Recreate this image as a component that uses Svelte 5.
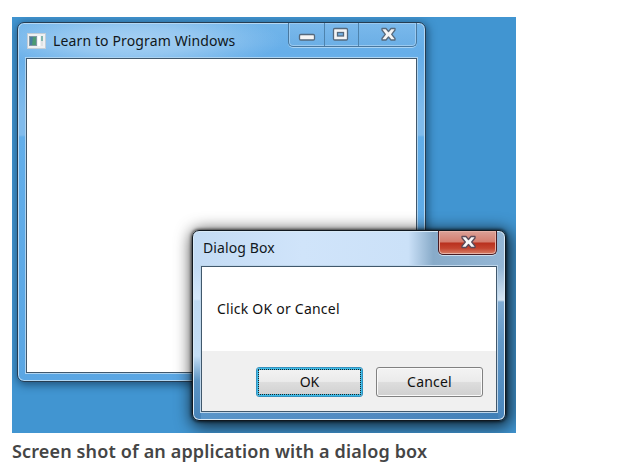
<script>
  const mainTitle = 'Learn to Program Windows';
  const dialogTitle = 'Dialog Box';
</script>

<figure>
  <div class="desktop">
    <section class="window main">
      <header>
        <svg class="appicon" width="19" height="16" viewBox="0 0 19 16">
          <rect x=".5" y=".5" width="18" height="15" fill="#eef0f2" stroke="#c3cdd6" />
          <rect x="2" y="3" width="8" height="10" fill="#8097a4" />
          <path d="M3 4h3v8H3z" fill="#497ca0" />
          <path d="M6 4h3v8H5z" fill="#4c9a72" />
          <path d="M11 3h2v10h-2z" fill="#fff" />
          <path d="M14 3h2v5h-2z" fill="#81b7b0" />
          <path d="M14 8h2v5h-2z" fill="#dfe2e4" />
        </svg>
        <span class="title t1">{mainTitle}</span>
        <div class="controls">
          <i class="min"><svg width="35" height="22"><rect x="10.5" y="11.5" width="15" height="5.5" rx="1.2" fill="#f5f5f5" stroke="#56697c" stroke-width="1.3" /></svg></i>
          <i class="max"><svg width="33" height="22"><rect x="8.5" y="5.5" width="14" height="11.5" rx="1.2" fill="#f5f5f5" stroke="#56697c" stroke-width="1.3" /><rect x="12.5" y="9.5" width="6" height="3.5" fill="#76b3e6" stroke="#56697c" stroke-width="1.3" /></svg></i>
          <i class="close"><svg width="58" height="22"><path d="M23 5.500h4l2.500 3 2.500-3h4v1.500l-3.300 4.300 3.300 4.200v1.500h-4l-2.500-3-2.500 3h-4v-1.500l3.300-4.200-3.300-4.300z" fill="#f5f5f5" stroke="#56697c" stroke-width="1.3" stroke-linejoin="round" /></svg></i>
        </div>
      </header>
      <div class="client"></div>
    </section>

    <section class="window dialog">
      <header>
        <span class="title t2">{dialogTitle}</span>
        <div class="red"><svg width="58" height="22"><path d="M23 5.500h4l2.500 3 2.500-3h4v1.500l-3.300 4 3.300 4v1.500h-4l-2.500-3-2.500 3h-4v-1.500l3.300-4-3.300-4z" fill="#f8f8f8" stroke="#5b4a58" stroke-width="1.3" stroke-linejoin="round" /></svg></div>
      </header>
      <div class="client">
        <p><span class="t3">Click OK or Cancel</span></p>
        <footer>
          <button class="ok"><span class="t4">OK</span></button>
          <button><span class="t5">Cancel</span></button>
        </footer>
      </div>
    </section>
  </div>
  <figcaption><span>Screen shot of an application with a dialog box</span></figcaption>
</figure>

<style>
  :global(body) {
    background: #fff;
  }
  * {
    box-sizing: border-box;
  }
  figure {
    margin: 0;
    padding: 17px 0 0 12px;
    height: 473px;
    overflow: hidden;
    font-family: 'Noto Sans', 'Open Sans', sans-serif;
  }
  svg {
    display: block;
  }
  .desktop {
    position: relative;
    width: 504px;
    height: 416px;
    overflow: hidden;
    background: #4195d1;
  }
  .window {
    position: absolute;
    display: flex;
    flex-direction: column;
    border: 1px solid #263d52;
    border-radius: 7px;
  }
  .main {
    left: 5px;
    top: 5px;
    width: 409px;
    height: 360px;
    padding: 1px 7px 7px;
    background:
      radial-gradient(ellipse 150px 30px at 115px 18px, #a6d0f3 0, #a0cdf2cc 45%, #a0cdf200 100%),
      linear-gradient(180deg, #72b5ea 0, #66aee9 30px, #80bbec 90px, #80bbec 112px, #62aeea 114px, #5aa6e3 100%);
    box-shadow: inset 0 0 0 1px #b4d8f4, 1px 2px 8px 1px #0b294499;
  }
  .dialog {
    left: 180px;
    top: 213px;
    width: 314px;
    height: 191px;
    padding: 1px 7px 7px;
    border-color: #101820;
    background:
      linear-gradient(180deg, transparent 0, transparent 36px, #d5e8fa 68px, #c0daf2 70px, #c4def6 125px, #5c94c4 150px, #4683b9 100%) 0 0 / 8px 100% no-repeat,
      linear-gradient(180deg, transparent 0, transparent 36px, #d5e5f3 69px, #7fabd2 71px, #6298c7 110px, #4885bc 100%) 100% 0 / 7px 100% no-repeat,
      linear-gradient(90deg, #5a95c9, #5089c0 60%, #3f7fb7) 0 100% / 100% 8px no-repeat,
      linear-gradient(90deg, #c3dbf4 0, #d0e4fa 35%, #cbe1f8 69%, #88abc9 77%, #94b6d5 100%);
    box-shadow: inset 0 0 0 1px #d8e9f6, 0 0 3px 1px #0009, 2px 3px 16px 3px #000b;
  }
  header {
    display: flex;
    flex: 0 0 33px;
    align-items: flex-start;
  }
  .appicon {
    margin: 9px 0 0 2px;
  }
  .title,
  p span,
  button span,
  figcaption span {
    display: inline-block;
    white-space: nowrap;
  }
  .title {
    color: #101720;
    font-size: 14px;
    line-height: 20px;
  }
  .t1 {
    margin: 7px 0 0 7px;
    letter-spacing: 0.13px;
  }
  .t2 {
    margin: 6px 0 0 3px;
    letter-spacing: 0.1px;
  }
  .t3 {
    letter-spacing: 0.23px;
  }
  .controls {
    display: flex;
    width: 129px;
    height: 24px;
    margin: -1px 1px 0 auto;
    border: 1px solid #49789f;
    border-top: 0;
    border-radius: 0 0 5px 5px;
    box-shadow: 0 1px 0 #a9d3f3, inset 0 0 0 1px #9bcaf0;
    background: linear-gradient(#80bbec99, #6daee399);
  }
  .controls i {
    overflow: hidden;
  }
  .controls i + i {
    border-left: 1px solid #4e83ad;
  }
  .min {
    width: 35px;
  }
  .max {
    width: 34px;
  }
  .close {
    flex: 1;
  }
  .red {
    width: 59px;
    height: 24px;
    margin: -1px 1px 0 auto;
    border: 1px solid #481c24;
    border-top: 0;
    border-radius: 0 0 5px 5px;
    background: linear-gradient(#dba198 0, #d47c6d 49%, #b82f1d 51%, #c4442f 75%, #d7826a 100%);
    box-shadow: inset 0 0 0 1px #e7b2a7, 0 1px 0 #ccdeed;
  }
  .client {
    flex: 1;
    border: 1px solid #41586c;
    outline: 1px solid #add3f0;
    background: #fff;
    display: flex;
    flex-direction: column;
    margin: 1px;
  }
  .dialog .client {
    outline-color: #bed6eb;
    background: linear-gradient(#fff 84px, #f0f0f0 84px);
  }
  p {
    margin: 0;
    padding: 31px 0 0 15px;
    height: 84px;
    color: #111;
    font-size: 14px;
    line-height: 22px;
  }
  footer {
    display: flex;
    gap: 13px;
    padding: 16px 0 0 54px;
  }
  button {
    width: 107px;
    height: 30px;
    padding: 0;
    border: 1px solid #818181;
    border-radius: 3px;
    background: linear-gradient(#f3f3f3 0, #ebebeb 48%, #dddddd 52%, #d0d0d0 100%);
    box-shadow: inset 0 0 0 1px #fafafa;
    color: #111;
    font: 14px/26px 'Noto Sans', 'Open Sans', sans-serif;
  }
  .t5 {
    letter-spacing: 0.2px;
  }
  .ok {
    border-color: #3591bd;
    box-shadow: inset 0 0 0 2px #3ebce8;
    outline: 1px dotted #222;
    outline-offset: -3px;
  }
  figcaption {
    color: #454545;
    font-size: 18px;
    line-height: 24px;
    font-weight: 600;
    letter-spacing: 0.14px;
    padding-top: 6px;
  }
</style>
